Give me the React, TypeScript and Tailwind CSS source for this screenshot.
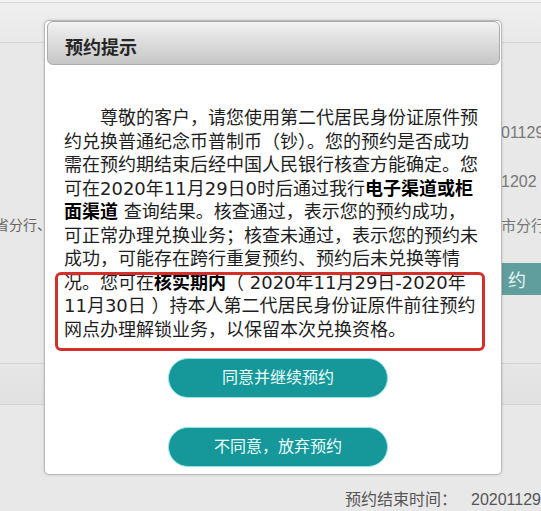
import React from "react";

const bodyFont = {
  fontFamily: '"DejaVu Sans", "Noto Sans CJK SC", sans-serif',
};

export default function App() {
  return (
    <div
      className="relative w-[541px] h-[511px] overflow-hidden bg-[#e8e8e8] text-[#333]"
      style={{ fontFamily: '"Noto Sans CJK SC", sans-serif' }}
    >
      {/* background page */}
      <div className="h-[3px] bg-[#f3f3f3] border-b border-[#d8d8d8]" />
      <div className="h-[40px] bg-gradient-to-b from-[#efefef] to-[#e9e9e9] border-b border-[#d3d3d3]" />
      <div className="flex h-[320px]">
        <div className="w-[46px] overflow-hidden">
          <div className="mt-[171px] h-[20px] leading-[20px] text-[14px] text-[#666] whitespace-nowrap ml-[-5px]">
            省分行、
          </div>
        </div>
        <div className="flex-1" />
        <div className="w-[40px] overflow-hidden">
          <div
            className="mt-[80px] h-[20px] leading-[20px] text-[16px] text-[#777] whitespace-nowrap"
            style={{ fontFamily: '"Liberation Sans", sans-serif' }}
          >
            01129
          </div>
          <div
            className="mt-[29px] h-[20px] leading-[20px] text-[16px] text-[#777] whitespace-nowrap"
            style={{ fontFamily: '"Liberation Sans", sans-serif' }}
          >
            1202
          </div>
          <div className="mt-[23px] h-[20px] leading-[20px] text-[15px] text-[#777] whitespace-nowrap">
            市分行
          </div>
          <div className="mt-[28px] h-[32px] w-[60px] bg-[#5f9e9c] text-[#e6f4f4] text-[18px] leading-[32px] pl-[7px]">
            约
          </div>
        </div>
      </div>
      <div className="h-[42px] bg-gradient-to-b from-[#e6e6e6] to-[#e1e1e1] border-y border-[#d2d2d2]" />
      <div className="mt-[83px] pl-[345px] h-[20px] leading-[20px] text-[16px] text-[#555] whitespace-nowrap">
        预约结束时间：
        <span
          className="ml-[14px]"
          style={{ fontFamily: '"Liberation Sans", sans-serif' }}
        >
          20201129
        </span>
      </div>

      {/* modal */}
      <div className="absolute left-[44px] top-[20px] w-[458px] h-[455px] bg-white border border-[#b9b9b9] rounded-[5px] shadow-[0_0_3px_rgba(0,0,0,0.15)]">
        <div className="ml-[2px] mr-[1px] h-[44px] rounded-[6px] border border-[#ababab] bg-gradient-to-b from-[#f2f2f2] to-[#c6c6c6] flex items-center pl-[17px] pt-[5px]">
          <span className="text-[18px] font-bold text-[#262626] leading-none">
            预约提示
          </span>
        </div>
        <div className="pl-[19px] pt-[41px]" style={bodyFont}>
          <div className="text-[18px] leading-[23.5px] text-[#1e1e1e] whitespace-nowrap">
            <div className="pl-[36px]">尊敬的客户，请您使用第二代居民身份证原件预</div>
            <div>约兑换普通纪念币普制币（钞）。您的预约是否成功</div>
            <div>需在预约期结束后经中国人民银行核查方能确定。您</div>
            <div>
              可在2020年11月29日0时后通过我行
              <b className="font-bold text-black">电子渠道或柜</b>
            </div>
            <div>
              <b className="font-bold text-black">面渠道</b> 查询结果。核查通过，表示您的预约成功，
            </div>
            <div>可正常办理兑换业务；核查未通过，表示您的预约未</div>
            <div>成功，可能存在跨行重复预约、预约后未兑换等情</div>
            <div>
              况。您可在<b className="font-bold text-black">核实期内</b>（ 2020年11月29日-2020年
            </div>
            <div>11月30日 ）持本人第二代居民身份证原件前往预约</div>
            <div>网点办理解锁业务，以保留本次兑换资格。</div>
          </div>
          <button className="block mt-[17px] ml-[104px] w-[220px] h-[40px] rounded-full bg-[#16979a] border border-[#93e6e6] text-[#ecffff] text-[16px] leading-[38px] text-center">
            同意并继续预约
          </button>
          <button className="block mt-[29px] ml-[104px] w-[220px] h-[40px] rounded-full bg-[#16979a] border border-[#93e6e6] text-[#ecffff] text-[16px] leading-[38px] text-center">
            不同意，放弃预约
          </button>
        </div>
        {/* red annotation box */}
        <div className="absolute left-[10px] top-[251px] w-[430px] h-[79px] border-[3px] border-[#d3302c] rounded-[6px]" />
      </div>
    </div>
  );
}
